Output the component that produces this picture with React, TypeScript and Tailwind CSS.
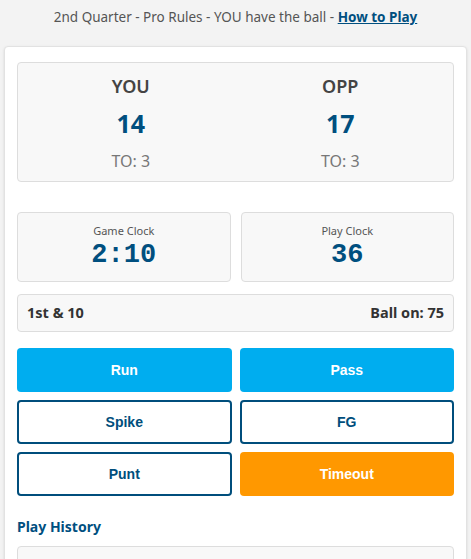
import React from 'react';

const sans = "font-['Segoe_UI','Noto_Sans','Open_Sans',sans-serif]";

function TeamScore({ name, score, to }: { name: string; score: number; to: number }) {
  return (
    <div className="flex flex-col items-center">
      <div className="text-[18px] font-semibold text-[#444] leading-none mt-[14px]">{name}</div>
      <div className="text-[25px] font-bold text-[#004f7f] leading-none mt-[16px]">{score}</div>
      <div className="text-[16px] text-[#777] leading-none mt-[17px]">TO: {to}</div>
    </div>
  );
}

function Clock({ label, value }: { label: string; value: string }) {
  return (
    <div className="h-[70px] rounded-[4px] border border-[#ddd] bg-[#f8f8f8] flex flex-col items-center pt-[12px]">
      <div className="text-[11px] text-[#555] leading-none">{label}</div>
      <div className="font-['Liberation_Mono',monospace] font-bold text-[27px] text-[#004f7f] leading-none mt-[6px]">
        {value}
      </div>
    </div>
  );
}

export default function App() {
  const btn = "h-[44px] rounded-[4px] font-['Liberation_Sans',Arial,sans-serif] font-bold text-[14px] flex items-center justify-center";
  const outline = btn + " border-2 border-[#004e7c] bg-white text-[#004e7c]";

  return (
    <div className={`min-h-screen bg-[#f3f3f3] ${sans} px-[4px] pb-4`}>
      {/* status line */}
      <div className="h-[46px] flex items-start justify-center pt-[7px] text-[13.5px] text-[#555]">
        <span>
          2nd Quarter - Pro Rules - YOU have the ball -{' '}
          <a href="#" className="font-bold text-[#004f7f] underline">How to Play</a>
        </span>
      </div>

      <div className="bg-white border border-[#e2e2e2] rounded-[4px] shadow-sm px-[12px] pt-[15px] pb-6">
        {/* score */}
        <div className="h-[120px] rounded-[4px] border border-[#ddd] bg-[#f8f8f8] grid grid-cols-2 px-[8px]">
          <TeamScore name="YOU" score={14} to={3} />
          <TeamScore name="OPP" score={17} to={3} />
        </div>

        <div className="grid grid-cols-2 gap-[10px] mt-[30px]">
          <Clock label="Game Clock" value="2:10" />
          <Clock label="Play Clock" value="36" />
        </div>

        <div className="h-[38px] mt-[12px] rounded-[4px] border border-[#ddd] bg-[#f8f8f8] flex items-center justify-between px-[9px] text-[14.5px] font-bold text-[#333]">
          <span>1st &amp; 10</span>
          <span>Ball on: 75</span>
        </div>

        <div className="grid grid-cols-2 gap-x-[8px] gap-y-[8px] mt-[16px]">
          <button className={btn + " bg-[#00adef] text-white"}>Run</button>
          <button className={btn + " bg-[#00adef] text-white"}>Pass</button>
          <button className={outline}>Spike</button>
          <button className={outline}>FG</button>
          <button className={outline}>Punt</button>
          <button className={btn + " bg-[#ff9800] text-white"}>Timeout</button>
        </div>

        <div className="mt-[24px] text-[14px] font-bold text-[#004f7f] leading-none">Play History</div>
        <div className="mt-[12px] h-[60px] rounded-[4px] border border-[#ddd] bg-[#f8f8f8]" />
      </div>
    </div>
  );
}
